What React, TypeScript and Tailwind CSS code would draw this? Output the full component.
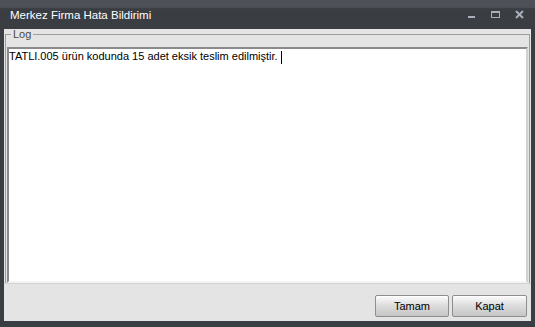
import React from 'react';

function TitleButtons() {
  return (
    <div className="flex items-center gap-[15px] pr-[11px] text-[#a7b0bb]">
      <svg width="9" height="9" viewBox="0 0 9 9">
        <rect x="1" y="6" width="7" height="2" fill="currentColor" />
      </svg>
      <svg width="9" height="9" viewBox="0 0 9 9">
        <rect x="0.5" y="1.5" width="8" height="6" fill="none" stroke="currentColor" />
        <rect x="0" y="1" width="9" height="2" fill="currentColor" />
      </svg>
      <svg width="9" height="9" viewBox="0 0 9 9">
        <path d="M1 1 L8 8 M8 1 L1 8" stroke="currentColor" strokeWidth="2" />
      </svg>
    </div>
  );
}

function WinButton({ label, w }: { label: string; w: string }) {
  return (
    <button
      className={`${w} h-[22px] rounded-[2px] border border-[#8e8e8e] bg-gradient-to-b from-[#f6f6f6] from-[10%] via-[#dedede] via-[45%] to-[#c6c6c6] text-[11px] text-black shadow-[inset_0_1px_0_#ffffff]`}
    >
      {label}
    </button>
  );
}

export default function App() {
  return (
    <div
      className="w-[535px] h-[327px] flex flex-col bg-[#3a3d42]"
      style={{ fontFamily: '"Liberation Sans", Arial, sans-serif' }}
    >
      {/* title bar */}
      <div className="h-[29px] flex items-center justify-between bg-gradient-to-b from-[#4d5056] from-[25%] to-[#3a3d42] to-[30%]">
        <span className="pl-[10px] pt-[2px] text-[11.5px] text-white">Merkez Firma Hata Bildirimi</span>
        <TitleButtons />
      </div>

      {/* client */}
      <div className="flex-1 mx-[4px] mb-[6px] bg-[#e4e4e4] flex flex-col">
        <fieldset className="mx-[1px] border-t border-l border-r border-[#9c9c9c] px-[1px] flex-1 flex flex-col min-h-0">
          <legend className="ml-[4px] px-[2px] text-[11px] text-[#4a4a42] leading-[10px]">Log</legend>
          <div className="mt-[8px] flex-1 bg-white border-t-2 border-l-2 border-[#8a8a8a] border-r-2 border-r-[#d0d0d0] border-b-2 border-b-[#f4f4f4] text-[11px] leading-[14px] text-black">
            TATLI.005 ürün kodunda 15 adet eksik teslim edilmiştir.{' '}
            <span className="inline-block w-[1px] h-[13px] bg-black align-middle" />
          </div>
        </fieldset>
        <div className="h-[38px] flex items-end justify-end gap-[3px] pr-[4px] pb-[4px] border-t border-[#d2d2d2]">
          <WinButton label="Tamam" w="w-[74px]" />
          <WinButton label="Kapat" w="w-[75px]" />
        </div>
      </div>
    </div>
  );
}
